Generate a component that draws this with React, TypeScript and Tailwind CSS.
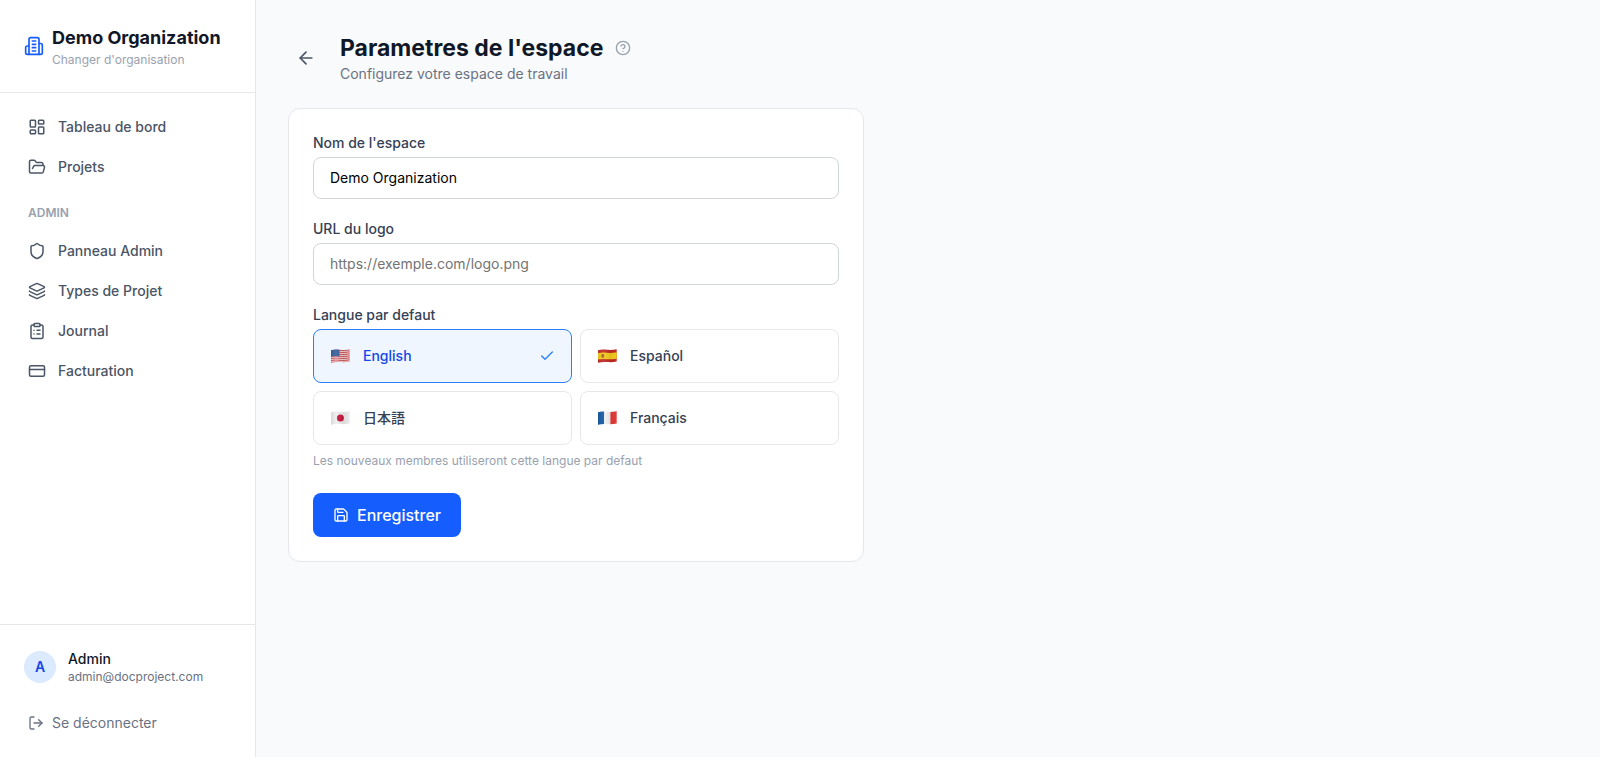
import React, { useState } from 'react';
import {
  ArrowLeft,
  Check,
  CircleHelp,
  ClipboardList,
  CreditCard,
  FolderOpen,
  Layers,
  LayoutDashboard,
  LogOut,
  Save,
  Shield,
  type LucideIcon,
} from 'lucide-react';

interface NavItem {
  label: string;
  icon: LucideIcon;
}

interface Language {
  code: string;
  label: string;
  flag: React.ReactNode;
}

const mainNav: NavItem[] = [
  { label: 'Tableau de bord', icon: LayoutDashboard },
  { label: 'Projets', icon: FolderOpen },
];

const adminNav: NavItem[] = [
  { label: 'Panneau Admin', icon: Shield },
  { label: 'Types de Projet', icon: Layers },
  { label: 'Journal', icon: ClipboardList },
  { label: 'Facturation', icon: CreditCard },
];

// Waving outline shared by every flag
const WAVE = 'M1 1.2C4 0.3 7 0.5 10 0.8S16 1 19.7 0.2V12.4C16 13.3 13 13.2 10 13S4 12.8 1 13.7Z';

const Flag: React.FC<{ id: string; children: React.ReactNode }> = ({ id, children }) => (
  <svg viewBox="0 0 21 14" className="h-[14px] w-[21px] shrink-0" aria-hidden="true">
    <defs>
      <clipPath id={id}>
        <path d={WAVE} />
      </clipPath>
      <linearGradient id={`${id}-shade`} x1="0" x2="1" y1="0" y2="0">
        <stop offset="0" stopColor="#000" stopOpacity="0.12" />
        <stop offset="0.3" stopColor="#fff" stopOpacity="0.08" />
        <stop offset="0.65" stopColor="#000" stopOpacity="0.08" />
        <stop offset="1" stopColor="#000" stopOpacity="0" />
      </linearGradient>
    </defs>
    <g clipPath={`url(#${id})`}>
      {children}
      <rect width="21" height="14" fill={`url(#${id}-shade)`} />
    </g>
  </svg>
);

const stripe = (y: number) => `M0 ${y + 0.7}C4 ${y - 0.1} 7 ${y} 10 ${y + 0.3}S16 ${y + 0.5} 21 ${y - 0.4}`;

const languages: Language[] = [
  {
    code: 'en',
    label: 'English',
    flag: (
      <Flag id="flag-us">
        <rect width="21" height="14" fill="#f1dcdc" />
        {[1, 3, 5, 7, 9, 11, 13].map((y) => (
          <path key={y} d={stripe(y)} stroke="#d0454c" strokeWidth="1" fill="none" />
        ))}
        <path d="M0 0H9.5V7.4C6 7 3 7.2 0 7.8Z" fill="#3a619b" />
      </Flag>
    ),
  },
  {
    code: 'es',
    label: 'Español',
    flag: (
      <Flag id="flag-es">
        <rect width="21" height="14" fill="#c32a24" />
        <path d={stripe(6.7)} stroke="#f5cd1b" strokeWidth="6.4" fill="none" />
        <rect x="4.4" y="5" width="2.8" height="3.8" rx="0.8" fill="#a8612a" />
      </Flag>
    ),
  },
  {
    code: 'ja',
    label: '日本語',
    flag: (
      <Flag id="flag-jp">
        <rect width="21" height="14" fill="#eeeeee" />
        <circle cx="10.4" cy="7" r="3.5" fill="#c8193c" />
      </Flag>
    ),
  },
  {
    code: 'fr',
    label: 'Français',
    flag: (
      <Flag id="flag-fr">
        <rect width="7.2" height="14" fill="#1259a4" />
        <rect x="7.2" width="6.2" height="14" fill="#f4f4f4" />
        <rect x="13.4" width="7.6" height="14" fill="#e63c37" />
      </Flag>
    ),
  },
];

const OrganizationIcon: React.FC = () => (
  <svg
    viewBox="0 0 24 24"
    fill="none"
    stroke="currentColor"
    strokeWidth="2"
    strokeLinecap="round"
    strokeLinejoin="round"
    className="size-5 shrink-0 text-blue-600"
    aria-hidden="true"
  >
    <path d="M6 22V4a2 2 0 0 1 2-2h8a2 2 0 0 1 2 2v18Z" />
    <path d="M6 12H4a2 2 0 0 0-2 2v6a2 2 0 0 0 2 2h2" />
    <path d="M18 9h2a2 2 0 0 1 2 2v9a2 2 0 0 1-2 2h-2" />
    <path d="M10 6h4" />
    <path d="M10 10h4" />
    <path d="M10 14h4" />
    <path d="M10 18h4" />
  </svg>
);

const NavLink: React.FC<NavItem> = ({ label, icon: Icon }) => (
  <a
    href="#"
    className="flex items-center gap-3 rounded-lg px-3 py-2 text-sm font-medium text-gray-600 hover:bg-gray-50"
  >
    <Icon size={18} />
    {label}
  </a>
);

const Sidebar: React.FC = () => (
  <aside className="flex w-64 shrink-0 flex-col border-r border-gray-200 bg-white">
    <div className="border-b border-gray-200 p-6">
      <a href="#" className="flex items-center gap-2">
        <OrganizationIcon />
        <div className="min-w-0">
          <h1 className="truncate text-lg font-bold text-gray-900">Demo Organization</h1>
          <p className="text-xs text-gray-400">Changer d'organisation</p>
        </div>
      </a>
    </div>

    <nav className="flex-1 space-y-1 p-4">
      {mainNav.map((item) => (
        <NavLink key={item.label} {...item} />
      ))}
      <div className="px-3 pt-4 pb-2">
        <p className="text-xs font-semibold text-gray-400 uppercase">Admin</p>
      </div>
      {adminNav.map((item) => (
        <NavLink key={item.label} {...item} />
      ))}
    </nav>

    <div className="border-t border-gray-200 p-4">
      <div className="mb-3 flex items-center gap-3 p-2">
        <div className="flex size-8 items-center justify-center rounded-full bg-blue-100 text-sm font-semibold text-blue-700">
          A
        </div>
        <div className="min-w-0">
          <p className="truncate text-sm font-medium text-gray-900">Admin</p>
          <p className="truncate text-xs text-gray-500">admin@docproject.com</p>
        </div>
      </div>
      <button
        type="button"
        className="flex w-full items-center gap-2 rounded-lg px-3 py-2 text-sm text-gray-500 hover:bg-gray-50"
      >
        <LogOut size={16} />
        Se déconnecter
      </button>
    </div>
  </aside>
);

const inputClass =
  'w-full rounded-lg border border-gray-300 bg-white px-4 py-2.5 text-sm text-black placeholder:text-neutral-500 focus:outline-none focus:ring-2 focus:ring-blue-500';

const SettingsForm: React.FC = () => {
  const [name, setName] = useState('Demo Organization');
  const [logoUrl, setLogoUrl] = useState('');
  const [language, setLanguage] = useState('en');

  return (
    <form
      onSubmit={(e) => e.preventDefault()}
      className="max-w-xl rounded-xl border border-gray-200 bg-white p-6"
    >
      <div className="space-y-5">
        <div>
          <label htmlFor="name" className="mb-1 block text-sm font-medium text-gray-700">
            Nom de l'espace
          </label>
          <input
            id="name"
            type="text"
            value={name}
            onChange={(e) => setName(e.target.value)}
            className={inputClass}
          />
        </div>

        <div>
          <label htmlFor="logo" className="mb-1 block text-sm font-medium text-gray-700">
            URL du logo
          </label>
          <input
            id="logo"
            type="url"
            value={logoUrl}
            onChange={(e) => setLogoUrl(e.target.value)}
            placeholder="https://exemple.com/logo.png"
            className={inputClass}
          />
        </div>

        <div role="group" aria-labelledby="language-label">
          <p id="language-label" className="mb-1 text-sm font-medium text-gray-700">
            Langue par defaut
          </p>
          <div className="grid grid-cols-2 gap-2">
            {languages.map(({ code, label, flag }) => {
              const selected = code === language;
              return (
                <button
                  key={code}
                  type="button"
                  aria-pressed={selected}
                  onClick={() => setLanguage(code)}
                  className={`flex items-center gap-3 rounded-lg border px-4 py-3 text-left text-sm leading-7 font-medium ${
                    selected
                      ? 'border-blue-500 bg-blue-50 text-blue-700'
                      : 'border-gray-200 text-gray-700 hover:bg-gray-50'
                  }`}
                >
                  {flag}
                  <span className="flex-1">{label}</span>
                  {selected && <Check size={16} className="text-blue-500" />}
                </button>
              );
            })}
          </div>
          <p className="mt-2 text-xs text-gray-400">
            Les nouveaux membres utiliseront cette langue par defaut
          </p>
        </div>
      </div>

      <button
        type="submit"
        className="mt-6 flex items-center gap-2 rounded-lg bg-blue-600 px-5 py-2.5 font-medium text-white hover:bg-blue-700"
      >
        <Save size={16} />
        Enregistrer
      </button>
    </form>
  );
};

const App: React.FC = () => (
  <div className="flex min-h-screen bg-gray-50 font-[Inter,'Noto_Sans_CJK_JP',sans-serif]">
    <Sidebar />
    <main className="flex-1 p-8">
      <header className="mb-6 flex items-center gap-4">
        <button
          type="button"
          aria-label="Retour"
          className="rounded-lg p-2 text-gray-600 hover:bg-gray-100"
        >
          <ArrowLeft size={20} />
        </button>
        <div>
          <div className="flex items-center gap-3">
            <h2 className="text-[23px] leading-8 font-bold text-gray-900">Parametres de l'espace</h2>
            <button type="button" aria-label="Aide" className="text-gray-400 hover:text-gray-600">
              <CircleHelp size={16} />
            </button>
          </div>
          <p className="text-sm text-gray-500">Configurez votre espace de travail</p>
        </div>
      </header>
      <SettingsForm />
    </main>
  </div>
);

export default App;
